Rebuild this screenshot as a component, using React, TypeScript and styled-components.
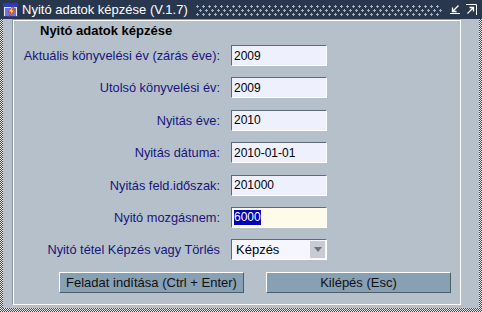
import React from "react";
import styled, { createGlobalStyle } from "styled-components";

const GlobalStyle = createGlobalStyle`
  html, body {
    margin: 0;
    padding: 0;
    background: #b6c0ca;
  }
  body {
    font-family: "Liberation Sans", Arial, sans-serif;
    font-size: 12px;
  }
`;

const Window = styled.div`
  width: 482px;
  height: 312px;
  box-sizing: border-box;
  padding: 0 3px 4px 3px;
  display: flex;
  flex-direction: column;
  background-color: #dcdcdc;
  background-image: repeating-conic-gradient(#4a4a4a 0% 25%, #e8e8e8 0% 50%);
  background-size: 2px 2px;
`;

const TitleBar = styled.div`
  height: 19px;
  flex: 0 0 19px;
  margin: 0 -3px;
  padding-left: 3px;
  display: flex;
  align-items: center;
  background: #28374e;
  color: #fff;
`;

const TitleText = styled.span`
  font-size: 13px;
  margin-left: 3px;
  white-space: nowrap;
`;

const DotFill = styled.div`
  flex: 1;
  height: 12px;
  margin: 0 8px 0 8px;
  background-image: radial-gradient(circle at 1.5px 1.5px, #a4afc0 1px, transparent 1.3px),
    radial-gradient(circle at 4.5px 5.5px, #a4afc0 1px, transparent 1.3px);
  background-size: 6px 8px;
  background-position: 0 1px;
`;

const WinButtons = styled.div`
  display: flex;
  gap: 6px;
  margin-right: 5px;
`;

const Client = styled.div`
  flex: 1;
  background: #b6c0ca;
  padding: 1px 18px 3px 10px;
  display: flex;
`;

const Panel = styled.div`
  flex: 1;
  border: 1px solid #fff;
  box-shadow: -1px -1px 0 #8e98a2;
  display: flex;
  flex-direction: column;
`;

const Heading = styled.div`
  font-weight: bold;
  font-size: 13px;
  color: #000;
  padding: 2px 0 0 26px;
  height: 22px;
  line-height: 16px;
`;

const Form = styled.div`
  display: grid;
  grid-template-columns: 206px 96px;
  column-gap: 11px;
  row-gap: 11.4px;
  grid-auto-rows: 21px;
`;

const Label = styled.label`
  color: #16167a;
  font-size: 12.8px;
  text-align: right;
  align-self: center;
  white-space: nowrap;
`;

const Field = styled.div<{ $active?: boolean }>`
  box-sizing: border-box;
  height: 21px;
  border-top: 1px solid #5e6a78;
  border-left: 1px solid #5e6a78;
  border-right: 1px solid #fff;
  border-bottom: 1px solid #fff;
  background: ${(p) => (p.$active ? "#fffbea" : "#eef0fd")};
  color: #000;
  font-size: 12px;
  display: flex;
  align-items: center;
  padding-left: 2px;
`;

const Selected = styled.span`
  background: #0000b4;
  color: #fff;
  line-height: 15px;
`;

const SelectBox = styled(Field)`
  justify-content: space-between;
  padding-left: 4px;
  padding-right: 1px;
  background: #f6f6ff;
  font-size: 13px;
`;

const DropBtn = styled.div`
  width: 15px;
  height: 17px;
  background: #c8ccd2;
  display: flex;
  align-items: center;
  justify-content: center;
`;

const ButtonRow = styled.div`
  display: flex;
  gap: 22px;
  padding-left: 45px;
  margin-top: 12px;
`;

const Button = styled.button`
  width: 185px;
  height: 21px;
  box-sizing: border-box;
  padding: 0;
  background: #87a0b3;
  border-top: 1px solid #fff;
  border-left: 1px solid #fff;
  border-right: 1px solid #4e5c6a;
  border-bottom: 1px solid #4e5c6a;
  font-family: "Liberation Sans", Arial, sans-serif;
  font-size: 13px;
  color: #111;
`;

const AppIcon = () => (
  <svg width="16" height="16" viewBox="0 0 16 16">
    <rect x="0.5" y="1.5" width="14" height="13" fill="#e8e8f0" stroke="#3a3a8a" />
    <rect x="1" y="2" width="13" height="3" fill="#2a3cc8" />
    <rect x="2" y="6" width="11" height="8" fill="#6878e0" />
    <path d="M9 5 L5 10 L8 10 L6 15 L12 8 L9 8 L11 5 Z" fill="#f6e030" stroke="#d02020" strokeWidth="0.8" />
  </svg>
);

const MinIcon = () => (
  <svg width="10" height="10" viewBox="0 0 10 10">
    <path d="M8.5 1.5 L2.5 7.5 M2.5 3.5 V7.5 H6.5" stroke="#fff" strokeWidth="1.3" fill="none" />
    <path d="M0 9.5 H10" stroke="#fff" strokeWidth="1" />
  </svg>
);

const MaxIcon = () => (
  <svg width="11" height="11" viewBox="0 0 11 11">
    <path d="M0 0.5 H10.5 V11" stroke="#fff" strokeWidth="1" fill="none" />
    <path d="M1.5 9.5 L7.5 3.5 M3.5 3.5 H7.5 V7.5" stroke="#fff" strokeWidth="1.3" fill="none" />
  </svg>
);

const rows = [
  { label: "Aktuális könyvelési év (zárás éve):", value: "2009" },
  { label: "Utolsó könyvelési év:", value: "2009" },
  { label: "Nyitás éve:", value: "2010" },
  { label: "Nyitás dátuma:", value: "2010-01-01" },
  { label: "Nyitás feld.időszak:", value: "201000" },
];

export default function App() {
  return (
    <Window>
      <GlobalStyle />
      <TitleBar>
        <AppIcon />
        <TitleText>Nyitó adatok képzése (V.1.7)</TitleText>
        <DotFill />
        <WinButtons>
          <MinIcon />
          <MaxIcon />
        </WinButtons>
      </TitleBar>
      <Client>
        <Panel>
          <Heading>Nyitó adatok képzése</Heading>
          <Form>
            {rows.map((r) => (
              <React.Fragment key={r.label}>
                <Label>{r.label}</Label>
                <Field>{r.value}</Field>
              </React.Fragment>
            ))}
            <Label>Nyitó mozgásnem:</Label>
            <Field $active>
              <Selected>6000</Selected>
            </Field>
            <Label>Nyitó tétel Képzés vagy Törlés</Label>
            <SelectBox>
              <span>Képzés</span>
              <DropBtn>
                <svg width="8" height="5" viewBox="0 0 8 5">
                  <path d="M0 0 H8 L4 5 Z" fill="#6a7480" />
                </svg>
              </DropBtn>
            </SelectBox>
          </Form>
          <ButtonRow>
            <Button>Feladat indítása (Ctrl + Enter)</Button>
            <Button>Kilépés (Esc)</Button>
          </ButtonRow>
        </Panel>
      </Client>
    </Window>
  );
}
